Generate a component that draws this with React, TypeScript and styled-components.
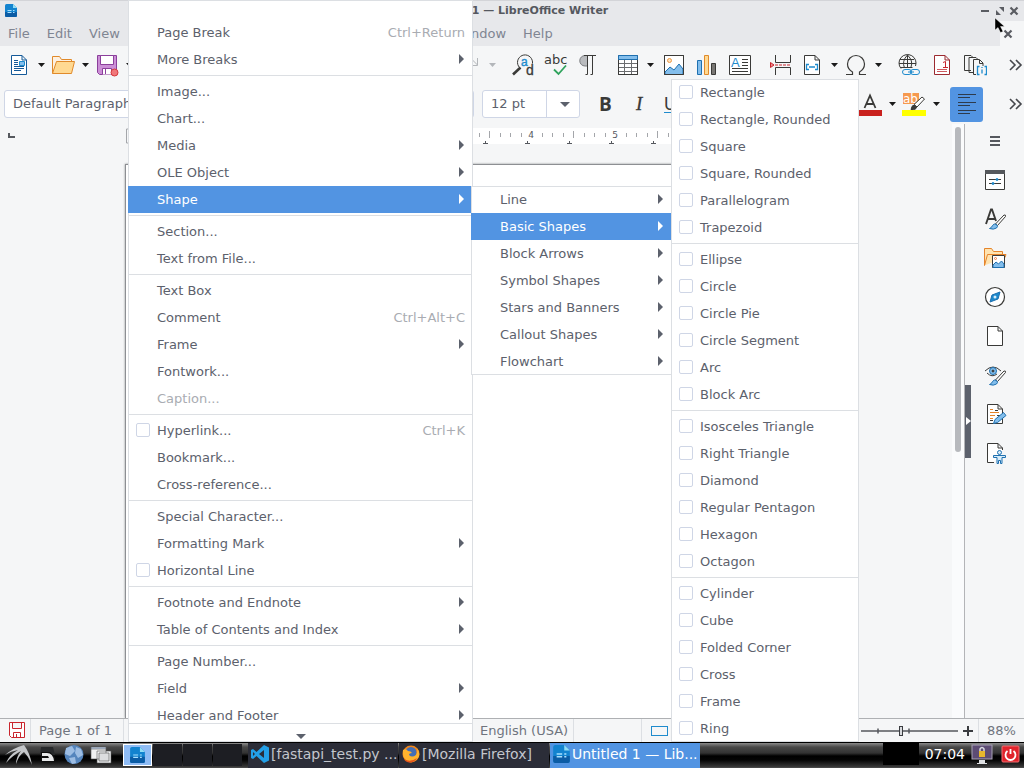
import React from 'react';
import styled, { createGlobalStyle, css } from 'styled-components';
import {
  ClipboardPaste, Copy, FileDown, Paintbrush, Printer, RemoveFormatting, Scissors,
  Search, Strikethrough, Subscript, Superscript, Undo2, Baseline,
} from 'lucide-react';

const c = {
  bar: '#f5f6f7',
  title: '#e7e8eb',
  text: '#5c616c',
  muted: '#a9acb2',
  line: '#dcdfe3',
  field: '#cfd6e6',
  accent: '#5294e2',
  ink: '#3a3a38',
  blue: '#1e8bcd',
};

const GlobalStyle = createGlobalStyle`
  * { box-sizing: border-box; }
  body { margin: 0; overflow: hidden; font: 13px/16px "DejaVu Sans", sans-serif; color: ${c.text}; }
  button, select, input { font: inherit; color: inherit; margin: 0; }
  button { border: 0; padding: 0; background: none; }
  svg { display: block; flex: none; }
`;

const Desktop = styled.div`
  position: relative;
  display: flex;
  flex-direction: column;
  height: 100vh;
  overflow: hidden;
  background: ${c.bar};
`;

/* ---------- window frame ---------- */

const TitleBar = styled.header`
  display: grid;
  grid-template-columns: 60px 1fr 58px;
  align-items: center;
  height: 21px;
  flex: none;
  padding: 0 5px 1px;
  border-top: 1px solid #d3d4d8;
  background: ${c.title};
`;
const Title = styled.h1`
  margin: 0;
  font-size: 11px;
  line-height: 16px;
  text-align: center;
  color: #55585f;
`;
const WindowButtons = styled.div`
  display: flex;
  justify-content: flex-end;
  gap: 3px;
`;
const MenuRow = styled.div`
  display: flex;
  height: 25px;
  flex: none;
`;
const MenuBar = styled.nav`
  display: flex;
  flex: 1;
  background: ${c.title};
`;
const MenuGroup = styled.div`
  display: flex;
  & + & { margin-left: 318px; }
`;
const MenuTitle = styled.button`
  padding: 0 9px 0 8px;
  color: #7f8592;
`;
const CloseDoc = styled.button`
  display: flex;
  align-items: center;
  justify-content: center;
  width: 24px;
  padding-right: 8px;
`;

/* ---------- toolbars ---------- */

const Toolbar = styled.div<{ $h: number }>`
  display: flex;
  align-items: center;
  height: ${p => p.$h}px;
  flex: none;
  padding-left: 3px;
`;
const ToolGroup = styled.div<{ $lead?: number }>`
  display: flex;
  flex: none;
  margin-left: ${p => p.$lead ?? 8}px;
`;
const ToolButton = styled.button<{ $wide?: boolean }>`
  display: flex;
  align-items: center;
  justify-content: center;
  width: ${p => (p.$wide ? 33 : 32)}px;
  height: 32px;
`;
const DropButton = styled.button`
  display: flex;
  align-items: center;
  justify-content: center;
  width: 12px;
  height: 32px;
`;
const AlignButton = styled.button`
  display: flex;
  align-items: center;
  justify-content: center;
  width: 33px;
  height: 35px;
  border-radius: 3px;
  background: ${c.accent};
`;
const MoreButton = styled.button`
  display: flex;
  justify-content: flex-end;
  width: 16px;
  margin: 0 1px 0 auto;
`;
const Combo = styled.div<{ $w: number }>`
  display: flex;
  position: relative;
  width: ${p => p.$w}px;
  height: 28px;
  flex: none;
  margin-right: 8px;
  border: 1px solid ${c.field};
  border-radius: 3px;
  background: #fff;
  &:first-child { margin-left: 1px; }
`;
const ComboSelect = styled.select`
  appearance: none;
  flex: 1;
  min-width: 0;
  padding: 0 8px;
  border: 0;
  background: none;
  outline: none;
`;
const ComboArrow = styled.span`
  display: flex;
  align-items: center;
  justify-content: center;
  width: 33px;
  padding-left: 3px;
  border-left: 1px solid ${c.field};
`;

/* ---------- document and sidebar ---------- */

const Workspace = styled.div`
  display: flex;
  flex: 1;
  min-height: 0;
`;
const DocColumn = styled.main`
  display: flex;
  flex-direction: column;
  flex: 1;
  min-width: 0;
  overflow: hidden;
`;
const RulerRow = styled.div`
  display: flex;
  padding: 4px 0 0 8px;
  height: 40px;
  flex: none;
`;
const RulerBox = styled.div`
  width: 714px;
  height: 16px;
  margin-left: 110px;
`;
const Page = styled.div`
  flex: 1;
  width: 716px;
  margin-left: 125px;
  border: solid #8d8f93;
  border-width: 1px 2px 0 1px;
  background: #fff;
  box-shadow: 0 0 2px #8d8f93;
`;
const ScrollTrack = styled.div`
  width: 12px;
  padding: 3px 3px 0;
  background: #fafbfc;
`;
const ScrollThumb = styled.div`
  height: 55%;
  border-radius: 3px;
  background: #b7b9bd;
`;
const Sidebar = styled.aside`
  display: flex;
  width: 60px;
  border-left: 1px solid #b3b4b7;
`;
const SideHandle = styled.button`
  display: flex;
  align-items: center;
  align-self: center;
  width: 6px;
  height: 73px;
  background: #5c616c;
`;
const SideTabs = styled.div`
  display: flex;
  flex-direction: column;
  align-items: center;
  width: 48px;
`;
const SideTab = styled.button`
  display: flex;
  align-items: center;
  justify-content: center;
  width: 36px;
  height: 39px;
  flex: none;
  &:first-child { height: 36px; }
`;

/* ---------- status bar ---------- */

const StatusBar = styled.footer`
  display: flex;
  justify-content: space-between;
  height: 24px;
  flex: none;
  border-top: 1px solid #aeb0b3;
`;
const StatusSide = styled.div`
  display: flex;
`;
const StatusCell = styled.div<{ $w: number }>`
  display: flex;
  align-items: center;
  width: ${p => p.$w}px;
  padding-left: 8px;
  border-right: 1px solid ${c.line};
  white-space: nowrap;
  color: #6f747e;
  &:last-child { border-right: 0; }
`;

/* ---------- task bar ---------- */

const TaskBar = styled.footer`
  display: flex;
  align-items: stretch;
  height: 26px;
  flex: none;
  border-top: 1px solid #000;
  background: linear-gradient(#8a8a8a 0, #484848 4px, #333 10px, #000 13px, #050505 17px, #3a3a3a 24px, #555 100%);
  font-size: 14px;
  color: #fff;
`;
const Launchers = styled.div`
  display: flex;
  align-items: center;
  gap: 5px;
  width: 123px;
  padding: 0 0 2px 5px;
`;
const Launcher = styled.button`
  display: flex;
`;
const Pager = styled.div`
  display: flex;
  gap: 1px;
  width: 125px;
  padding: 1px 0 2px;
`;
const Desk = styled.button<{ $on?: boolean }>`
  display: flex;
  align-items: center;
  justify-content: center;
  width: 29px;
  background: ${p => (p.$on ? '#8fbcf5' : '#1d1e23')};
  ${p => p.$on && css`border: 1px solid #fff;`}
`;
const Task = styled.button<{ $on?: boolean }>`
  display: flex;
  align-items: center;
  gap: 2px;
  width: 150px;
  margin-right: 1px;
  padding: 0 0 3px 3px;
  white-space: nowrap;
  color: ${p => (p.$on ? '#fff' : '#c3c6cd')};
  background: ${p => (p.$on ? c.accent : '#2b2d38')};
`;
const Tray = styled.div`
  display: flex;
  align-items: center;
  gap: 6px;
  margin-left: auto;
  padding: 0 3px 3px 0;
`;
const Monitor = styled.div`
  width: 36px;
  height: 22px;
  background: #000;
`;

/* ---------- popup menus ---------- */

const Popup = styled.div<{ $x: number; $y: number; $w: number }>`
  position: absolute;
  left: ${p => p.$x}px;
  top: ${p => p.$y}px;
  width: ${p => p.$w}px;
  background: #fff;
  box-shadow: inset 0 0 0 1px ${c.line};
`;
const InsertPopup = styled(Popup)`
  display: flex;
  flex-direction: column;
  bottom: 26px;
`;
const MenuList = styled.div`
  flex: 1;
  min-height: 0;
  overflow: hidden;
  padding-top: 19px;
`;
const ScrollDown = styled.button`
  display: flex;
  align-items: center;
  justify-content: center;
  height: 19px;
  flex: none;
  padding-top: 6px;
  border-top: 1px solid ${c.line};
`;
const rowStyle = css<{ $on?: boolean; $off?: boolean }>`
  display: flex;
  align-items: center;
  width: 100%;
  height: 27px;
  padding: 0 8px;
  white-space: nowrap;
  color: ${p => (p.$on ? '#fff' : p.$off ? c.muted : c.text)};
  background: ${p => (p.$on ? c.accent : 'transparent')};
`;
const ItemButton = styled.button<{ $on?: boolean; $off?: boolean }>`
  ${rowStyle}
  padding-left: 29px;
`;
const ItemLabel = styled.label<{ $on?: boolean; $off?: boolean }>`
  ${rowStyle}
`;
const Check = styled.input`
  appearance: none;
  width: 14px;
  height: 14px;
  && { margin: 0 7px 1px 0; }
  border: 1px solid ${c.field};
  border-radius: 2px;
  background: #fff;
`;
const Shortcut = styled.span`
  margin-left: auto;
  color: ${c.muted};
`;
const SubArrow = styled.span`
  margin-left: auto;
  padding: 0 1px 1px 0;
`;
const Rule = styled.hr`
  height: 1px;
  margin: 2px 0;
  border: 0;
  background: ${c.line};
`;
const Pointer = styled.div`
  position: absolute;
  top: 17px;
  right: 17px;
`;

/* ---------- icons ---------- */

const Ico = ({ children, s = 24 }: { children: React.ReactNode; s?: number }) => (
  <svg width={s} height={s} viewBox={`0 0 ${s} ${s}`} fill="none" stroke={c.ink} aria-hidden="true">{children}</svg>
);
const DownArrow = ({ fill = '#1a1a1a' }: { fill?: string }) => (
  <svg width="7" height="4" viewBox="0 0 7 4" aria-hidden="true"><path d="M0 0h7L3.5 4z" fill={fill} /></svg>
);
const RightArrow = () => (
  <svg width="5" height="10" viewBox="0 0 5 10" aria-hidden="true"><path d="M0 0L5 5L0 10z" fill="currentColor" /></svg>
);
const Chevrons = () => (
  <svg width="14" height="12" viewBox="0 0 14 12" fill="none" stroke="#45474c" strokeWidth="1.6" aria-hidden="true">
    <path d="M1 1l5 5-5 5M7 1l5 5-5 5" />
  </svg>
);
const Cross = () => (
  <svg width="10" height="10" viewBox="0 0 10 10" stroke="#5a5c62" strokeWidth="2.2" aria-hidden="true"><path d="M1.5 1.5l7 7M8.5 1.5l-7 7" /></svg>
);
const WriterLogo = ({ s = 12 }: { s?: number }) => (
  <svg width={s} height={s + 1} viewBox="0 0 12 13" aria-hidden="true">
    <path d="M1.5 0H8l4 4v7.5q0 1.5-1.5 1.5h-9Q0 13 0 11.500V1.500Q0 0 1.500 0z" fill="#1283cf" />
    <path d="M0 8h12v3.500q0 1.500-1.500 1.500h-9Q0 13 0 11.500z" fill="#0b5ca5" />
    <path d="M8 0l4 4H8z" fill="#8fdcf5" />
    <path d="M2.500 6.500h4M2.500 8.500h4M8 6.500h1.500M8 8.500h1.500" stroke="#a5e0ff" />
  </svg>
);
const pageFold = 'M4.5 2.500h10.500l4.500 4.500v14.500h-15zM15 2.500v4.500h4.500';

const NewIcon = () => (
  <Ico><path d={pageFold} stroke="#155a99" fill="#fff" />
    <path d="M7 7.500h4M7 9.500h4M7 11.500h4M7 13.500h10M7 15.500h10M7 17.500h7" stroke="#155a99" />
    <path d="M12.500 8.500h5v4h-5z" stroke={c.blue} fill="#83beec" /></Ico>
);
const OpenIcon = () => (
  <Ico><path d="M1.500 20.500v-17h7l2 3h10v3" stroke="#e08a2b" fill="#fdf0e0" />
    <path d="M1.500 20.500l4-12h18l-3 12z" stroke="#e08a2b" fill="#ffd992" /></Ico>
);
const SaveIcon = () => (
  <Ico><path d="M2.500 2.500h19v19h-17l-2-2z" stroke="#8b3f9b" fill="#cb8fd6" />
    <path d="M5.500 2.500h13v9h-13zM7.500 21.500v-6h9v6M10.500 16v5" stroke="#8b3f9b" fill="#fff" />
    <circle cx="19.500" cy="19.500" r="3.500" fill="#f0777a" stroke="#d5383c" /></Ico>
);
const RedoIcon = () => <Ico><path d="M13.500 6l6 6M19.500 5v7.500h-7" stroke="#b3b6ba" /></Ico>;
const FindIcon = () => (
  <Ico><path d="M7.500 14.500A7.500 7.500 0 1 1 20.500 9v1.500" /><path d="M8.500 14.500L1 21.500" strokeWidth="2.600" />
    <text x="9" y="13" fontSize="12" fill={c.blue} stroke={c.blue} strokeWidth=".4" fontFamily="Liberation Sans">a</text>
    <text x="14" y="22" fontSize="14" fill={c.ink} stroke={c.ink} strokeWidth=".3" fontFamily="Liberation Sans">d</text></Ico>
);
const SpellIcon = () => (
  <Ico><text x="0" y="11" fontSize="13" fill={c.ink} stroke="none" fontFamily="DejaVu Sans">abc</text>
    <path d="M10 16.500l4.500 4.500L22 12.500" stroke="#2fa35c" strokeWidth="1.800" /></Ico>
);
const PilcrowIcon = () => (
  <Ico><path d="M11.500 2.500H9a5 5 0 0 0 0 10.500h2.500z" fill="#b9bbbe" stroke="#7c7e82" />
    <path d="M8 2.500h12M11.500 2.500v19h-2M16.500 2.500v19h-2" /></Ico>
);
const TableIcon = () => (
  <Ico><path d="M2.500 2.500h19v19h-19z" fill="#fff" /><path d="M2.500 2.500h19v4h-19z" fill="#83beec" stroke="#1e70b0" />
    <path d="M2.500 7v14.500h19V7" /><path d="M8.500 7v14M15.500 7v14M3 10.500h18M3 14.500h18M3 18.500h18" stroke="#6b6d70" /></Ico>
);
const ImageIcon = () => (
  <Ico><path d="M2.500 2.500h19v19h-19z" fill="#fff" /><circle cx="7.500" cy="7.500" r="2" fill="#fde0bb" stroke="#ed9a45" />
    <path d="M3 19l5-5 4 3 5-6 4 5v5.500H3z" fill="#83beec" stroke="#1e70b0" /><path d="M2.500 2.500h19v19h-19z" /></Ico>
);
const ChartIcon = () => (
  <Ico><path d="M2.500 7.500h4v14h-4z" fill="#83beec" stroke="#1e70b0" />
    <path d="M9.500 2.500h4v19h-4z" fill="#ffd992" stroke="#e08a2b" /><path d="M16.500 10.500h4v11h-4z" fill="#797774" /></Ico>
);
const TextBoxIcon = () => (
  <Ico><path d="M1.500 2.500h21v19h-21z" fill="#fff" /><path d="M14 6.500h6M14 9.500h6M14 12.500h6M4 15.500h16M4 18.500h16" />
    <text x="3" y="14" fontSize="13" fill={c.blue} stroke="none" fontFamily="Liberation Sans">A</text></Ico>
);
const BreakIcon = () => (
  <Ico><path d="M7.500 2v7.500h15V2M7.500 22v-7.500h15V22" /><path d="M7 12h16" stroke="#c9252d" strokeDasharray="3 1" />
    <path d="M2.500 9.500v5l3.500-2.500z" fill="#ee8b8e" stroke="#c9252d" /></Ico>
);
const FieldIcon = () => (
  <Ico><path d={pageFold} fill="#fff" /><path d="M9 11.500H6.500v5H9M15 11.500h2.500v5H15M9 14h6" stroke={c.blue} strokeWidth="1.300" /></Ico>
);
const OmegaIcon = () => (
  <Ico><path d="M2 21.500h6.500v-2.500C5 17 3.500 14 3.500 11a8.500 8.500 0 0 1 17 0c0 3-1.500 6-5 8v2.500H22" strokeWidth="1.200" /></Ico>
);
const LinkIcon = () => (
  <Ico><path d="M4 15.500A8.500 8.500 0 1 1 18.500 13M2 10.500h17M3 6.500h14M10.500 2v13M10.500 2q-6 6-3 13M10.500 2q6 6 3.500 12M3.500 14.500h12" />
    <rect x="5.500" y="16.500" width="9" height="5" rx="2.500" stroke={c.blue} />
    <rect x="13.500" y="16.500" width="9" height="5" rx="2.500" stroke={c.blue} /><path d="M11 19h6" stroke={c.blue} /></Ico>
);
const FootnoteIcon = () => (
  <Ico><path d={pageFold} fill="#fff" stroke="#9c2a30" /><path d="M7 16.500h10M7 18.500h7M14 18.500h3" stroke="#ce5a60" />
    <path d="M13 9.500l2.500-1v6M13 14.500h5" stroke="#c9252d" /></Ico>
);
const IndexIcon = () => (
  <Ico><path d="M8 17.500H1.500v-15H8l2.500 2.500" /><path d="M6 19.500V4.500h7l2.500 2.500M10 19.500H6" />
    <path d="M13 21.500h-2.500v-15h6l3.500 3.500v3M16.500 7v3.500H20" fill="#f5f6f7" />
    <path d="M16.500 13.500h-2v8h2M21.500 13.500h2v8h-2M19 16.500v4M19 14v1" stroke={c.blue} strokeWidth="1.300" /></Ico>
);
const BoldIcon = () => <Ico><text x="5" y="19" fontSize="19" fontWeight="bold" fill={c.ink} stroke="none" fontFamily="Open Sans">B</text></Ico>;
const ItalicIcon = () => <Ico><text x="9" y="18" fontSize="19" fontStyle="italic" fill={c.ink} stroke={c.ink} strokeWidth=".3" fontFamily="Liberation Serif">I</text></Ico>;
const UnderlineIcon = () => (
  <Ico><text x="4" y="18" fontSize="18" fill={c.ink} stroke="none" fontFamily="Liberation Sans">U</text><path d="M4 20.500h14" stroke={c.blue} /></Ico>
);
const FontColorIcon = () => (
  <Ico><path d="M6.500 16L12 3.500 17.500 16M8.500 12h7" strokeWidth="1.800" /><path d="M1 18h23v6H1z" fill="#c9211e" stroke="none" /></Ico>
);
const HighlightIcon = () => (
  <Ico><path d="M1 1h16v11H1z" fill="#f6994f" stroke="none" />
    <text x="1" y="11" fontSize="12" fill="#fff" stroke="none" fontFamily="DejaVu Sans">ab</text>
    <path d="M12 12.500l8-7.500 2.500 2-7.500 8z" fill="#fff" /><path d="M0 18h24v6H0z" fill="#ffff00" stroke="none" />
    <path d="M9 17.500q1-5 3.500-4.500l2 2q0 3-5.500 2.500z" fill={c.ink} /></Ico>
);
const AlignIcon = () => <Ico><path d="M3 2.500h18M3 5.500h12M3 10.500h18M3 13.500h12M3 18.500h18M3 21.500h12" stroke="#2d3b4c" /></Ico>;

const HamburgerIcon = () => <Ico><path d="M7 7h10M7 11h10M7 15h10" strokeWidth="2" stroke="#55585e" /></Ico>;
const PropertiesIcon = () => (
  <Ico><path d="M2.500 2.500h19v19h-19z" fill="#fff" /><path d="M2 2h20v4H2z" fill="#55585c" stroke="none" />
    <path d="M6 11.500h12M6 15.500h12" /><circle cx="14" cy="11.500" r="1" fill={c.blue} stroke={c.blue} /><circle cx="10" cy="15.500" r="1" fill={c.blue} stroke={c.blue} /></Ico>
);
const Brush = () => (
  <><path d="M12.500 17l8.500-9q2-.5 1.500 1.500l-8 9z" fill="#fff" /><path d="M6.500 21.500q2-.5 3-3 1.500-2.500 4-1 2 2 0 3.500-3 2-7 .5z" fill="#83beec" stroke="#1e70b0" /></>
);
const StylesIcon = () => <Ico><path d="M3 17L8 2.500h1L13 14M5 12h7" strokeWidth="1.900" /><Brush /></Ico>;
const GalleryIcon = () => (
  <Ico><path d="M1.500 19.500v-17h7l2 3h9v3M1.500 19.500l3-11h18.500l-1 3" fill="#ffe3b0" stroke="#e5842b" />
    <path d="M9.500 9.500h12v12h-12z" fill="#fff" /><circle cx="12.500" cy="12.500" r="1" stroke="#ed7a45" /><path d="M10 19l3-3 2.500 2 3-3 2.500 3v3.500H10z" fill="#83beec" stroke="#1e70b0" /></Ico>
);
const NavigatorIcon = () => (
  <Ico><circle cx="12" cy="12" r="9.500" strokeWidth="1.200" fill="#fff" /><path d="M17 7l-2 7L7 17l2-7z" fill={c.blue} stroke="#1e70b0" /><circle cx="12" cy="12" r="1.500" fill="#d9edfa" stroke="none" /></Ico>
);
const PageIcon = () => <Ico><path d={pageFold} fill="#fff" /></Ico>;
const InspectorIcon = () => (
  <Ico><path d="M2 8q8-8 16 0M4 10q5 5 10 1" /><circle cx="10" cy="8" r="3.500" fill="#83beec" stroke="#1e70b0" /><circle cx="10" cy="8" r="1" fill={c.ink} /><Brush /></Ico>
);
const ChangesIcon = () => (
  <Ico><path d={pageFold} fill="#fff" /><path d="M7 7.500h3M7 10.500h9M7 13.500h5M7 16.500h3" stroke="#e5842b" /><path d="M12 8.500h3M14 13.500h3M7 18.500h3" />
    <path d="M10.500 21.500l1.500-4 8.500-7 2.500 3-8.500 7z" fill="#83beec" stroke="#1e70b0" /></Ico>
);
const AccessIcon = () => (
  <Ico><path d="M11 21.500H4.500v-19H15l4.500 4.500v2M15 2.500v4.500h4.500" fill="#fff" /><circle cx="16.500" cy="11.500" r="2" fill="#d9edfa" stroke="#1e70b0" />
    <path d="M10.500 14.500h12v2h-3.500v6h-1.500v-3h-2v3H14v-6h-3.500z" fill="#d9edfa" stroke="#1e70b0" /></Ico>
);

/* ---------- ruler ---------- */

const INCH = 84;
const ORIGIN = 69;
function Ruler() {
  const ticks: React.ReactNode[] = [];
  for (let k = 1; k < 54; k++) {
    const x = Math.round(ORIGIN + (k * INCH) / 8);
    if (k % 8 === 0) {
      ticks.push(<text key={k} x={x} y="10" fontSize="9" textAnchor="middle" fill="#55585e">{k / 8}</text>);
    } else {
      ticks.push(<path key={k} d={k % 4 === 0 ? `M${x}.5 3v7` : `M${x}.5 5v4`} stroke="#a4a6aa" />);
    }
    if (k % 4 === 0) ticks.push(<path key={`t${k}`} d={`M${x - 6} 15.500h5M${x - 4}.5 13v3`} stroke="#55585e" />);
  }
  return (
    <svg width="714" height="16" viewBox="0 0 714 16" aria-hidden="true">
      <path d={`M${ORIGIN} 0h580v16h-580z`} fill="#fff" />
      <path d="M.5 1v14h10V1z" fill="none" stroke="#a4a6aa" />
      {ticks}
    </svg>
  );
}

/* ---------- menu content ---------- */

type Entry = { t: string; sub?: boolean; key?: string; on?: boolean; off?: boolean; check?: boolean } | null;

const insertMenu: Entry[] = [
  { t: 'Page Break', key: 'Ctrl+Return' }, { t: 'More Breaks', sub: true }, null,
  { t: 'Image...' }, { t: 'Chart...' }, { t: 'Media', sub: true }, { t: 'OLE Object', sub: true },
  { t: 'Shape', sub: true, on: true }, null,
  { t: 'Section...' }, { t: 'Text from File...' }, null,
  { t: 'Text Box' }, { t: 'Comment', key: 'Ctrl+Alt+C' }, { t: 'Frame', sub: true }, { t: 'Fontwork...' },
  { t: 'Caption...', off: true }, null,
  { t: 'Hyperlink...', key: 'Ctrl+K', check: true }, { t: 'Bookmark...' }, { t: 'Cross-reference...' }, null,
  { t: 'Special Character...' }, { t: 'Formatting Mark', sub: true }, { t: 'Horizontal Line', check: true }, null,
  { t: 'Footnote and Endnote', sub: true }, { t: 'Table of Contents and Index', sub: true }, null,
  { t: 'Page Number...' }, { t: 'Field', sub: true }, { t: 'Header and Footer', sub: true },
];
const shapeMenu: Entry[] = [
  'Line', 'Basic Shapes', 'Block Arrows', 'Symbol Shapes', 'Stars and Banners', 'Callout Shapes', 'Flowchart',
].map(t => ({ t, sub: true, on: t === 'Basic Shapes' }));
const basicShapes: Entry[] = [
  'Rectangle', 'Rectangle, Rounded', 'Square', 'Square, Rounded', 'Parallelogram', 'Trapezoid', '',
  'Ellipse', 'Circle', 'Circle Pie', 'Circle Segment', 'Arc', 'Block Arc', '',
  'Isosceles Triangle', 'Right Triangle', 'Diamond', 'Regular Pentagon', 'Hexagon', 'Octagon', '',
  'Cylinder', 'Cube', 'Folded Corner', 'Cross', 'Frame', 'Ring',
].map(t => (t ? { t, check: true } : null));

function Entries({ list }: { list: Entry[] }) {
  return (
    <>
      {list.map((e, i) => {
        if (!e) return <Rule key={i} />;
        const tail = <>{e.key && <Shortcut>{e.key}</Shortcut>}{e.sub && <SubArrow><RightArrow /></SubArrow>}</>;
        return e.check
          ? <ItemLabel key={i}><Check type="checkbox" />{e.t}{tail}</ItemLabel>
          : <ItemButton key={i} $on={e.on} $off={e.off} disabled={e.off}>{e.t}{tail}</ItemButton>;
      })}
    </>
  );
}

function Tool({ label, icon, drop, dim, wide }: { label: string; icon: React.ReactNode; drop?: boolean; dim?: boolean; wide?: boolean }) {
  return (
    <>
      <ToolButton aria-label={label} $wide={wide}>{icon}</ToolButton>
      {drop && <DropButton aria-label={`${label} options`}><DownArrow fill={dim ? '#b3b6ba' : undefined} /></DropButton>}
    </>
  );
}

const menuGroups = [['File', 'Edit', 'View'], ['Window', 'Help']];
const sideTabs: [string, React.ReactNode][] = [
  ['Sidebar settings', <HamburgerIcon />], ['Properties', <PropertiesIcon />], ['Styles', <StylesIcon />],
  ['Gallery', <GalleryIcon />], ['Navigator', <NavigatorIcon />], ['Page', <PageIcon />],
  ['Style inspector', <InspectorIcon />], ['Manage changes', <ChangesIcon />], ['Accessibility check', <AccessIcon />],
];

export default function App() {
  return (
    <Desktop>
      <GlobalStyle />
      <TitleBar>
        <WriterLogo />
        <Title>Untitled 1 — LibreOffice Writer</Title>
        <WindowButtons>
          <button aria-label="Minimize"><svg width="12" height="10"><path d="M2 5h8" stroke="#5a5c62" strokeWidth="2" /></svg></button>
          <button aria-label="Maximize"><svg width="12" height="10"><path d="M5 1h5v5zM2 4v5h5z" fill="#5a5c62" /></svg></button>
          <button aria-label="Close"><Cross /></button>
        </WindowButtons>
      </TitleBar>
      <MenuRow>
        <MenuBar>
          {menuGroups.map(g => (
            <MenuGroup key={g[0]}>{g.map(m => <MenuTitle key={m}>{m}</MenuTitle>)}</MenuGroup>
          ))}
        </MenuBar>
        <CloseDoc aria-label="Close document"><Cross /></CloseDoc>
      </MenuRow>

      <Toolbar $h={38}>
        <ToolGroup $lead={0}>
          <Tool label="New" icon={<NewIcon />} drop />
          <Tool label="Open" icon={<OpenIcon />} drop />
          <Tool label="Save" icon={<SaveIcon />} drop />
        </ToolGroup>
        <ToolGroup $lead={13}>
          <Tool label="Export as PDF" icon={<FileDown size={20} />} />
          <Tool label="Print" icon={<Printer size={20} />} />
          <Tool label="Print preview" icon={<Search size={20} />} />
        </ToolGroup>
        <ToolGroup $lead={13}>
          <Tool label="Cut" icon={<Scissors size={20} />} />
          <Tool label="Copy" icon={<Copy size={20} />} />
          <Tool label="Paste" icon={<ClipboardPaste size={20} />} drop />
          <Tool label="Clone formatting" icon={<Paintbrush size={20} />} />
        </ToolGroup>
        <ToolGroup $lead={13}>
          <Tool label="Undo" icon={<Undo2 size={20} />} drop />
          <Tool label="Redo" icon={<RedoIcon />} drop dim />
        </ToolGroup>
        <ToolGroup $lead={10}>
          <Tool label="Find and replace" icon={<FindIcon />} />
          <Tool label="Spelling" icon={<SpellIcon />} />
          <Tool label="Formatting marks" icon={<PilcrowIcon />} />
        </ToolGroup>
        <ToolGroup>
          <Tool label="Insert table" icon={<TableIcon />} drop />
        </ToolGroup>
        <ToolGroup $lead={1}>
          <Tool label="Insert image" icon={<ImageIcon />} wide />
          <Tool label="Insert chart" icon={<ChartIcon />} wide />
          <Tool label="Insert text box" icon={<TextBoxIcon />} wide />
        </ToolGroup>
        <ToolGroup>
          <Tool label="Insert page break" icon={<BreakIcon />} />
          <Tool label="Insert field" icon={<FieldIcon />} drop />
          <Tool label="Special character" icon={<OmegaIcon />} drop />
        </ToolGroup>
        <ToolGroup>
          <Tool label="Hyperlink" icon={<LinkIcon />} wide />
          <Tool label="Footnote" icon={<FootnoteIcon />} wide />
          <Tool label="Index entry" icon={<IndexIcon />} wide />
        </ToolGroup>
        <MoreButton aria-label="More tools"><Chevrons /></MoreButton>
      </Toolbar>

      <Toolbar $h={40}>
        <Combo $w={200}>
          <ComboSelect aria-label="Paragraph style"><option>Default Paragraph Style</option></ComboSelect>
        </Combo>
        <Combo $w={262}>
          <ComboSelect aria-label="Font name"><option /></ComboSelect>
        </Combo>
        <Combo $w={98}>
          <ComboSelect aria-label="Font size"><option>12 pt</option></ComboSelect>
          <ComboArrow><svg width="10" height="5" viewBox="0 0 10 5"><path d="M0 0h10L5 5z" fill={c.text} /></svg></ComboArrow>
        </Combo>
        <ToolGroup $lead={1}>
          <Tool label="Bold" icon={<BoldIcon />} wide />
          <Tool label="Italic" icon={<ItalicIcon />} wide />
          <Tool label="Underline" icon={<UnderlineIcon />} wide />
          <Tool label="Strikethrough" icon={<Strikethrough size={20} />} wide />
          <Tool label="Superscript" icon={<Superscript size={20} />} wide />
          <Tool label="Subscript" icon={<Subscript size={20} />} wide />
          <Tool label="Clear formatting" icon={<RemoveFormatting size={20} />} wide />
          <Tool label="Character" icon={<Baseline size={20} />} wide />
        </ToolGroup>
        <ToolGroup $lead={1}>
          <Tool label="Font color" icon={<FontColorIcon />} drop />
          <Tool label="Highlight color" icon={<HighlightIcon />} drop />
        </ToolGroup>
        <ToolGroup>
          <AlignButton aria-label="Align left"><AlignIcon /></AlignButton>
        </ToolGroup>
        <MoreButton aria-label="More formatting"><Chevrons /></MoreButton>
      </Toolbar>

      <Workspace>
        <DocColumn>
          <RulerRow>
            <svg width="8" height="12" viewBox="0 0 8 12" aria-hidden="true"><path d="M1 5v4h6" fill="none" stroke="#55585e" strokeWidth="2" /></svg>
            <RulerBox><Ruler /></RulerBox>
          </RulerRow>
          <Page />
        </DocColumn>
        <ScrollTrack><ScrollThumb /></ScrollTrack>
        <Sidebar>
          <SideHandle aria-label="Hide sidebar">
            <svg width="6" height="8" viewBox="0 0 6 8"><path d="M1 0l5 4-5 4z" fill="#fff" /></svg>
          </SideHandle>
          <SideTabs>
            {sideTabs.map(([label, icon]) => <SideTab key={label} aria-label={label}>{icon}</SideTab>)}
          </SideTabs>
        </Sidebar>
      </Workspace>

      <StatusBar>
        <StatusSide>
          <StatusCell $w={31}>
            <Ico s={17}><path d="M1.500 .5h15v15h-13l-2-2zM4.500 .5v6h9v-6M5.500 15.500v-5h7v5M8.500 12v3" stroke="#c9252d" fill="#fff" /></Ico>
          </StatusCell>
          <StatusCell $w={93}>Page 1 of 1</StatusCell>
          <StatusCell $w={348} />
          <StatusCell $w={102}>English (USA)</StatusCell>
          <StatusCell $w={68} />
          <StatusCell $w={40}>
            <svg width="18" height="12"><rect x="1.500" y="1.500" width="16" height="9" fill="none" stroke={c.blue} /></svg>
          </StatusCell>
        </StatusSide>
        <StatusSide>
          <StatusCell $w={126}>
            <svg width="113" height="14" viewBox="0 0 113 14" aria-hidden="true">
              <path d="M0 7h97M17 4.500v5M48 4.500v5" stroke="#55585e" strokeWidth="1.500" />
              <rect x="38.500" y="2.500" width="3" height="9" fill="#d9dbde" stroke="#3a3c40" />
              <path d="M102 7h10M107 2v10" stroke="#3a3c40" strokeWidth="2" />
            </svg>
          </StatusCell>
          <StatusCell $w={45}>88%</StatusCell>
        </StatusSide>
      </StatusBar>

      <TaskBar>
        <Launchers>
          <Launcher aria-label="Start">
            <svg width="28" height="22" viewBox="0 0 28 22"><path d="M0 11q8-7 19-10 6 8 8 20-3-8-8-13-5 3-8 12 0-7 5-13-8 4-15 12 3-8 12-13-7 1-13 5z" fill="#c4c6c9" /></svg>
          </Launcher>
          <Launcher aria-label="Files">
            <svg width="20" height="22" viewBox="0 0 20 22"><path d="M3 3h12l2 8H2z" fill="#26282a" /><path d="M3 8h9l5 5v5H3z" fill="#0e0e0e" /><path d="M4 9h5q6 0 7 8H4v-3h7l-1-2H4z" fill="#e8e9ea" /></svg>
          </Launcher>
          <Launcher aria-label="Browser">
            <svg width="22" height="22" viewBox="0 0 22 22"><circle cx="11" cy="10.500" r="9.500" fill="#5585bd" /><path d="M3 4l6-2 3 5-5 5-5-2zM13 3l5 2 2 6-5 3-3-5zM6 14l6-1 1 6-4 1z" fill="#9dbde3" /></svg>
          </Launcher>
          <Launcher aria-label="Show desktop">
            <svg width="22" height="20" viewBox="0 0 22 20" stroke="#555" strokeWidth=".6"><path d="M1 2h15v12H1zM7 6h14v12H7z" fill="#f0f1f2" /><path d="M9 8h10v8H9z" fill="#dcdddf" /><path d="M1 2h15v2H1z" fill="#b9cbe4" /></svg>
          </Launcher>
        </Launchers>
        <Pager>
          <Desk $on aria-label="Desktop 1"><WriterLogo s={15} /></Desk>
          <Desk aria-label="Desktop 2" /><Desk aria-label="Desktop 3" /><Desk aria-label="Desktop 4" />
        </Pager>
        <Task>
          <svg width="18" height="18" viewBox="0 0 18 18"><path d="M13 0l5 2.500v13L13 18 5.500 11 2 14 0 13V5l2-1 3.500 3zM13 5L8 9l5 4zM2 7v4l2-2z" fill="#23a0e8" fillRule="evenodd" /></svg>
          [fastapi_test.py ...
        </Task>
        <Task>
          <svg width="18" height="18" viewBox="0 0 18 18"><circle cx="9" cy="9" r="8.500" fill="#f0861c" /><circle cx="9" cy="7.500" r="5.500" fill="#456fb5" /><path d="M1 5q3-2 5 1 3 0 4 2-3 0-3 2 3 3 7 0 2-3 1-7 4 6 1 10-4 5-9 4Q0 14 1 5z" fill="#ffb42e" /><path d="M2 14q6 4 13-1-3 5-8 4.500-4-1-5-3.500z" fill="#e4541b" /></svg>
          [Mozilla Firefox]
        </Task>
        <Task $on><WriterLogo s={17} />Untitled 1 — Lib...</Task>
        <Tray>
          <Monitor />
          <span>07:04</span>
          <svg width="22" height="22" viewBox="0 0 22 22" aria-hidden="true"><rect x="1" y="2" width="20" height="14" fill="#5d4c74" stroke="#a9a3b5" /><path d="M8 17h6v3H8zM6 20h10v1H6z" fill="#dfe0e3" /><path d="M8 8h6v6H8z" fill="#e6b62d" /><path d="M9 8V6q2-3 4 0v2" fill="none" stroke="#d7d9dd" strokeWidth="1.500" /></svg>
          <svg width="22" height="18" viewBox="0 0 22 18" aria-hidden="true"><rect x="3" y="1" width="17" height="16" rx="1" fill="#e0242c" stroke="#f27075" /><path d="M8.500 6a5 5 0 1 0 6 0M11.500 4v5" fill="none" stroke="#fff" strokeWidth="1.800" /></svg>
        </Tray>
      </TaskBar>

      <InsertPopup $x={128} $y={0} $w={345}>
        <MenuList><Entries list={insertMenu} /></MenuList>
        <ScrollDown aria-label="Scroll down"><svg width="10" height="5" viewBox="0 0 10 5"><path d="M0 0h10L5 5z" fill={c.text} /></svg></ScrollDown>
      </InsertPopup>
      <Popup $x={471} $y={186} $w={201}><Entries list={shapeMenu} /></Popup>
      <Popup $x={671} $y={79} $w={188}><Entries list={basicShapes} /></Popup>

      <Pointer>
        <svg width="13" height="17" viewBox="0 0 13 17" aria-hidden="true"><path d="M1 1v12l3-2.500L6.500 15.500l2.500-1L6.500 9.500H10.500z" fill="#000" stroke="#fff" strokeWidth=".4" /></svg>
      </Pointer>
    </Desktop>
  );
}
